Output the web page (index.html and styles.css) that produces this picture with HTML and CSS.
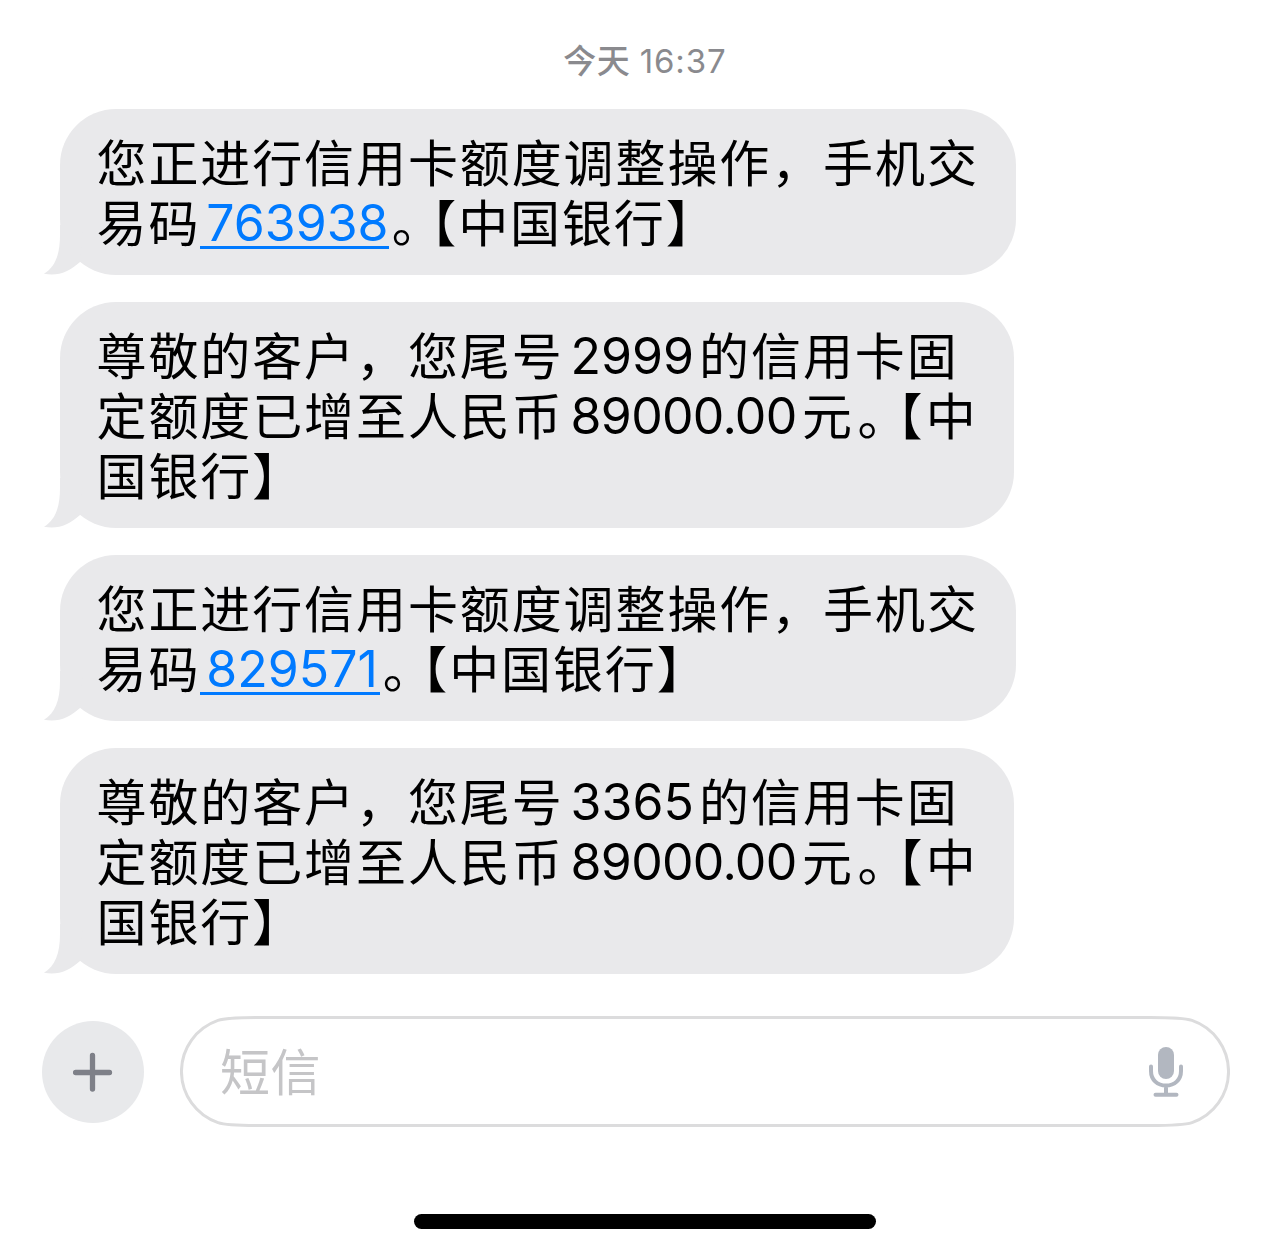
FILE: index.html
```html
<!DOCTYPE html>
<html lang="zh-CN">
<head>
    <meta charset="UTF-8">
    <meta name="viewport" content="width=device-width, initial-scale=1.0">
    <title>短信</title>
    <link rel="stylesheet" href="styles.css">
</head>
<body>
    <div class="container">
        <div class="timestamp">今天 <span class="time">16:37</span></div>

        <!-- Messages -->
        <div class="messages">
            <div class="bubble">
                <p>您正进行信用卡额度调整操作，手机交</p>
                <p>易码<a href="#" class="code">763938</a><span class="stop">。</span><span class="open">【</span>中国银行<span class="close">】</span></p>
                <svg class="tail" viewBox="0 0 40 50"><path d="M17 0V10C17 30 12 42 1 48.8C15 51.5 26 47 37 37L40 0Z"/></svg>
            </div>
            <div class="bubble long">
                <p>尊敬的客户，您尾号<span class="num">2999</span>的信用卡固</p>
                <p>定额度已增至人民币<span class="num amount">89000.00</span>元<span class="stop">。</span><span class="open">【</span>中</p>
                <p>国银行<span class="close">】</span></p>
                <svg class="tail" viewBox="0 0 40 50"><path d="M17 0V10C17 30 12 42 1 48.8C15 51.5 26 47 37 37L40 0Z"/></svg>
            </div>
            <div class="bubble">
                <p>您正进行信用卡额度调整操作，手机交</p>
                <p>易码<a href="#" class="code short">829571</a><span class="stop">。</span><span class="open">【</span>中国银行<span class="close">】</span></p>
                <svg class="tail" viewBox="0 0 40 50"><path d="M17 0V10C17 30 12 42 1 48.8C15 51.5 26 47 37 37L40 0Z"/></svg>
            </div>
            <div class="bubble long">
                <p>尊敬的客户，您尾号<span class="num">3365</span>的信用卡固</p>
                <p>定额度已增至人民币<span class="num amount">89000.00</span>元<span class="stop">。</span><span class="open">【</span>中</p>
                <p>国银行<span class="close">】</span></p>
                <svg class="tail" viewBox="0 0 40 50"><path d="M17 0V10C17 30 12 42 1 48.8C15 51.5 26 47 37 37L40 0Z"/></svg>
            </div>
        </div>

        <!-- Input bar -->
        <div class="input-bar">
            <button class="plus-button">
                <svg width="40" height="40" viewBox="0 0 40 40"><path d="M19.5 3.5V37M2.5 20.5H36.5"/></svg>
            </button>
            <div class="input-field">
                <svg class="outline" viewBox="0 0 1050 111"><path d="M80 1.5H970C992 1.5 1004 1.7 1012 4.4A54 54 0 0 1 1012 106.6C1004 109.3 992 109.5 970 109.5H80C58 109.5 46 109.3 38 106.6A54 54 0 0 1 38 4.4C46 1.7 58 1.5 80 1.5Z"/></svg>
                <span class="placeholder">短信</span>
                <svg class="mic" width="36" height="52" viewBox="0 0 36 52">
                    <rect x="10" y="1" width="16" height="32" rx="8"/>
                    <path d="M3 20.5V25C3 34 9.5 39.5 18 39.5S33 34 33 25V20.5M18 40V48M7.5 48.7H28.5"/>
                </svg>
            </div>
        </div>

        <div class="home-indicator"></div>
    </div>
</body>
</html>
```

FILE: styles.css
```css
body {
    margin: 0;
    background-color: #ffffff;
    color: #000000;
    font-family: Inter, 'Noto Sans CJK SC', sans-serif;
}
.container {
    width: 1277px;
    height: 1253px;
    box-sizing: border-box;
    padding-top: 41px;
    overflow: hidden;
}
.timestamp {
    height: 40px;
    line-height: 40px;
    padding-left: 13px;
    text-align: center;
    font-size: 33px;
    font-weight: 500;
    letter-spacing: 0.5px;
    color: #8a8a8e;
}
.time {
    font-weight: 400;
    letter-spacing: 0.9px;
}
.messages {
    display: flex;
    flex-direction: column;
    align-items: flex-start;
    gap: 27px;
    padding: 28px 0 0 60px;
}
.bubble {
    position: relative;
    width: 956px;
    box-sizing: border-box;
    padding: 21px 0 25px 36.5px;
    border-radius: 56px;
    background-color: #e9e9eb;
}
.bubble.long {
    width: 954px;
}
.bubble p {
    height: 60px;
    margin: 0;
    line-height: 60px;
    font-family: 'Noto Sans CJK SC', sans-serif;
    font-size: 50px;
    letter-spacing: 1.9px;
    white-space: nowrap;
    text-spacing-trim: space-all;
}
.tail {
    position: absolute;
    left: -17px;
    bottom: 0;
    width: 40px;
    height: 50px;
    fill: #e9e9eb;
}
.code,
.num {
    display: inline-block;
    box-sizing: border-box;
    height: 56px;
    margin-top: 3px;
    line-height: 60px;
    vertical-align: top;
    font-family: Inter, sans-serif;
    font-size: 50px;
    letter-spacing: 0;
}
.code {
    width: 189px;
    padding-left: 6px;
    border-bottom: 3px solid #007aff;
    color: #007aff;
    text-decoration: none;
}
.code.short {
    width: 180px;
}
.num {
    width: 135.5px;
    padding-left: 7px;
}
.amount {
    width: 238.5px;
    letter-spacing: -0.7px;
}
/* half-width punctuation */
.stop,
.open {
    font-feature-settings: "halt";
}
.stop {
    margin: 0 12.5px 0 2.5px;
}
.long .stop {
    margin: 0 13px 0 3.5px;
}
.long .open {
    margin-right: 1.5px;
}
.close {
    margin-left: 0;
}
.input-bar {
    display: flex;
    align-items: center;
    gap: 36px;
    padding: 42px 47px 0 42px;
}
.plus-button {
    display: flex;
    align-items: center;
    justify-content: center;
    width: 102px;
    height: 102px;
    padding: 0;
    border: none;
    border-radius: 50%;
    background-color: #e8e9eb;
}
.plus-button path {
    fill: none;
    stroke: #7e8088;
    stroke-width: 5.3;
    stroke-linecap: round;
}
.input-field {
    position: relative;
    display: flex;
    flex: 1;
    align-items: center;
    justify-content: space-between;
    height: 111px;
    box-sizing: border-box;
    padding: 0 46px 0 40px;
}
.outline {
    position: absolute;
    left: 0;
    top: 0;
    width: 1050px;
    height: 111px;
    fill: none;
    stroke: #dcdcdd;
    stroke-width: 3;
}
.placeholder {
    padding-bottom: 6px;
    font-family: 'Noto Sans CJK SC', sans-serif;
    font-size: 50px;
    line-height: 60px;
    letter-spacing: 0.5px;
    color: #c5c5c7;
}
.mic {
    fill: #b2b7c0;
}
.mic path {
    fill: none;
    stroke: #b2b7c0;
    stroke-width: 4;
    stroke-linecap: round;
}
.home-indicator {
    width: 462px;
    height: 15px;
    margin: 87px 0 0 414px;
    border-radius: 8px;
    background-color: #000000;
}
```
